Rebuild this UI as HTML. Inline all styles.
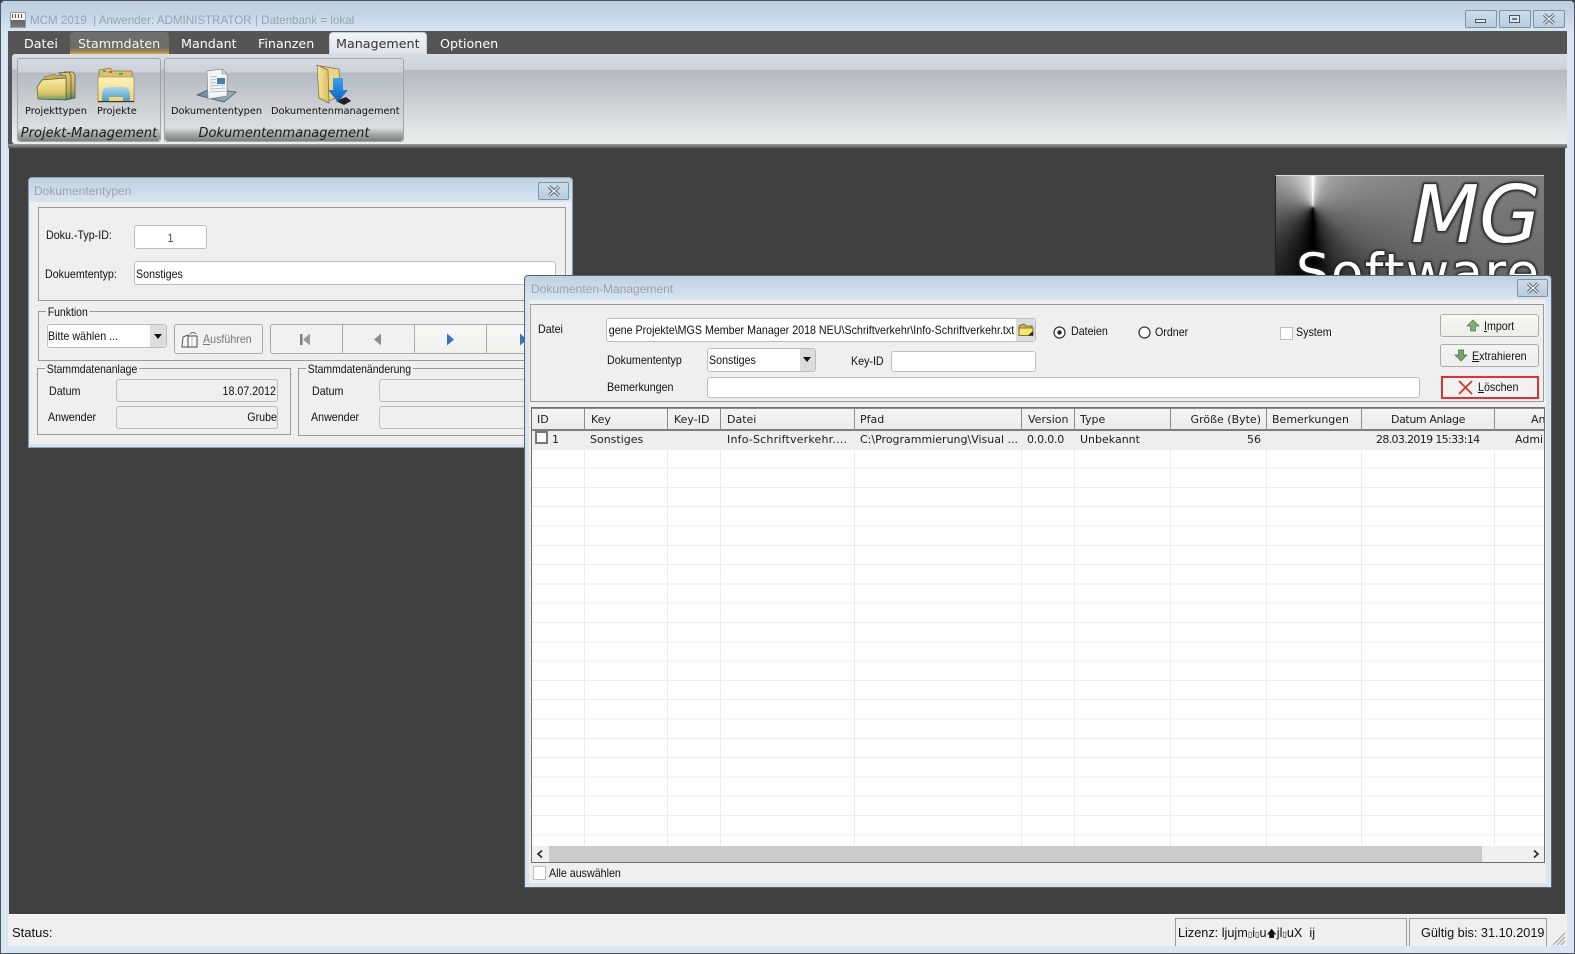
<!DOCTYPE html>
<html lang="de">
<head>
<meta charset="utf-8">
<title>MCM 2019</title>
<style>
html,body{margin:0;padding:0;width:1575px;height:954px;overflow:hidden;background:#404040}
*{box-sizing:border-box}
div,span,svg{position:absolute}
.t{white-space:nowrap;height:16px;font:12px/16px "Liberation Sans",sans-serif;color:#111;transform:scaleX(.89);transform-origin:0 50%}
.tr{transform-origin:100% 50%;text-align:right}
.n{transform:none}
.m{font:12.7px/16px "DejaVu Sans",sans-serif;color:#fff;white-space:nowrap}
.rl{font:9.8px/14px "DejaVu Sans",sans-serif;color:#111;white-space:nowrap}
.gl{font:italic 13px/16px "DejaVu Sans",sans-serif;color:#1a1a1a;white-space:nowrap;text-align:center}
.g{font:11px/16px "DejaVu Sans",sans-serif;color:#1c1c1c;white-space:nowrap}
.gb{border:1px solid #9a9a9a;background:#efefef}
.lg{background:#efefef;padding:0 2px;font:12px/14px "Liberation Sans",sans-serif;color:#111;white-space:nowrap;transform:scaleX(.87);transform-origin:0 50%}
.inp{background:#fff;border:1px solid #bdbdbd;border-radius:3px}
.ro{background:#efefef;border:1px solid #bdbdbd;border-radius:3px}
.btn{background:#f1f1f1;border:1px solid #ababab;border-radius:2px}
.wb{border:1px solid #7f93a8;border-radius:2px;background:linear-gradient(#cddbe8,#b9ccdd)}
.hc{top:0;height:23px;background:linear-gradient(#f4f4f4,#ebebeb);border-left:1px solid #8c8c8c;border-right:1px solid #8c8c8c;border-bottom:2px solid #7d7d7d;border-top:1px solid #8c8c8c;font:11px/21px "DejaVu Sans",sans-serif;color:#1c1c1c;white-space:nowrap;padding-left:6px;overflow:hidden}
.vl{top:0;width:1px;background:#ececec;height:416px}
u{text-decoration:underline}
</style>
</head>
<body>
<!-- main window frame -->
<div style="left:0;top:0;width:1575px;height:954px;background:#d8e5f2;border:1px solid #4c5560;border-radius:5px 5px 0 0"></div>
<div style="left:1px;top:1px;width:1573px;height:30px;background:linear-gradient(#bccfdf,#c5d7e7 50%,#d7e5f2);border-radius:4px 4px 0 0"></div>

<!-- app icon -->
<div style="left:10px;top:12px;width:16px;height:16px;background:linear-gradient(#f6f6f6 0,#f6f6f6 50%,#666 50%,#777);border:1px solid #999"></div>
<div style="left:12px;top:14px;width:12px;height:4px;background:repeating-linear-gradient(90deg,#555 0,#555 1px,#eee 1px,#eee 3px)"></div>
<div class="t n" style="left:30px;top:13px;color:#9aa3ac;font-size:11.6px">MCM 2019&nbsp; | Anwender: ADMINISTRATOR | Datenbank = lokal</div>

<!-- window buttons -->
<div class="wb" style="left:1465px;top:10px;width:32px;height:18px"></div>
<div style="left:1475px;top:19px;width:11px;height:4px;border:1px solid #4d5a66;background:#e8eef4"></div>
<div class="wb" style="left:1499px;top:10px;width:32px;height:18px"></div>
<div style="left:1509px;top:15px;width:11px;height:8px;border:1px solid #4d5a66;background:#dbe5ee"></div>
<div style="left:1512px;top:18px;width:5px;height:2px;background:#6b7885"></div>
<div class="wb" style="left:1533px;top:10px;width:32px;height:18px"></div>
<svg style="left:1542px;top:13px" width="14" height="12" viewBox="0 0 14 12"><path d="M2 1.5L12 10.5M12 1.5L2 10.5" stroke="#55626e" stroke-width="3.2"/><path d="M2 1.5L12 10.5M12 1.5L2 10.5" stroke="#eef3f7" stroke-width="1.3"/></svg>

<!-- menu bar -->
<div style="left:8px;top:31px;width:1559px;height:23px;background:#555"></div>
<div style="left:70px;top:32px;width:99px;height:22px;border-radius:4px 4px 0 0;background:linear-gradient(#6e6e6e 0,#6c6c6a 70%,#a08a54 90%,#d8ae4c 100%)"></div>
<div style="left:329px;top:32px;width:98px;height:23px;border-radius:4px 4px 0 0;background:linear-gradient(#f2f5f8,#dde2e8);border:1px solid #c8ced6;border-bottom:none"></div>
<div class="m" style="left:24px;top:36px">Datei</div>
<div class="m" style="left:78px;top:36px;color:#f6f6ee">Stammdaten</div>
<div class="m" style="left:181px;top:36px">Mandant</div>
<div class="m" style="left:258px;top:36px">Finanzen</div>
<div class="m" style="left:336px;top:36px;color:#333">Management</div>
<div class="m" style="left:440px;top:36px">Optionen</div>

<!-- ribbon -->
<div style="left:8px;top:54px;width:1559px;height:91px;background:#555"></div>
<div style="left:12px;top:54px;width:1555px;height:90px;border-radius:3px 0 0 3px;background:linear-gradient(#d8dde4 0,#cdd2da 17%,#b3b8c3 18%,#c6cacd 45%,#e2e8e8 85%,#e8eeee 100%)"></div>
<div style="left:8px;top:144px;width:1559px;height:4px;background:linear-gradient(#9a9a9a,#7c7c7c 50%,#595959)"></div>

<!-- ribbon group 1 -->
<div style="left:17px;top:58px;width:144px;height:84px;border:1px solid #a0a5aa;border-radius:3px;background:linear-gradient(#d6dbe2 0,#ccd1d9 16%,#b5bac4 17%,#c8ccd0 50%,#e2e7e7 100%)"></div>
<div style="left:18px;top:127px;width:142px;height:14px;background:linear-gradient(#dfe4e4,#a4a6a6 55%,#7f7f7f);border-radius:0 0 3px 3px"></div>
<div class="gl" style="left:18px;top:126px;width:142px;letter-spacing:.05px">Projekt-Management</div>
<!-- ribbon group 2 -->
<div style="left:164px;top:58px;width:240px;height:84px;border:1px solid #a0a5aa;border-radius:3px;background:linear-gradient(#d6dbe2 0,#ccd1d9 16%,#b5bac4 17%,#c8ccd0 50%,#e2e7e7 100%)"></div>
<div style="left:165px;top:127px;width:238px;height:14px;background:linear-gradient(#dfe4e4,#a4a6a6 55%,#7f7f7f);border-radius:0 0 3px 3px"></div>
<div class="gl" style="left:165px;top:126px;width:238px">Dokumentenmanagement</div>

<!-- Projekttypen icon -->
<svg style="left:36px;top:69px" width="40" height="33" viewBox="0 0 40 33">
<defs>
<linearGradient id="fa" x1="0" y1="0" x2="0" y2="1"><stop offset="0" stop-color="#f9ecac"/><stop offset=".65" stop-color="#e2c868"/><stop offset=".8" stop-color="#b4b668"/><stop offset="1" stop-color="#4f9a78"/></linearGradient>
<linearGradient id="fb" x1="0" y1="0" x2="0" y2="1"><stop offset="0" stop-color="#e4cc78"/><stop offset=".7" stop-color="#b8a858"/><stop offset="1" stop-color="#3f8a68"/></linearGradient>
</defs>
<path d="M28 3L37 3L39 6L39 29L34 30L34 6Z" fill="url(#fb)" stroke="#4c4c30" stroke-width=".7"/>
<path d="M23 4L33 3L35 7L35 30L29 31L29 8Z" fill="url(#fb)" stroke="#4c4c30" stroke-width=".7"/>
<path d="M8 8L18 5L21 7L30 6L30 29L5 29Z" fill="#c9ad57" stroke="#6b6236" stroke-width=".5"/>
<path d="M6 11L30 9L30 31L2 30L1 18Z" fill="url(#fa)" stroke="#5b5a30" stroke-width=".7"/>
</svg>
<!-- Projekte icon -->
<svg style="left:97px;top:66px" width="38" height="38" viewBox="0 0 38 38">
<defs>
<linearGradient id="fc" x1="0" y1="0" x2="0" y2="1"><stop offset="0" stop-color="#fdf2bc"/><stop offset="1" stop-color="#ecd076"/></linearGradient>
<linearGradient id="fd" x1="0" y1="0" x2="0" y2="1"><stop offset="0" stop-color="#a8d8ec"/><stop offset="1" stop-color="#4e96c4"/></linearGradient>
</defs>
<path d="M2 4L13 2L16 5L35 5L36 34L2 36Z" fill="#dcc06c" stroke="#8a7840" stroke-width=".7"/>
<rect x="6" y="4" width="3" height="2" fill="#5aa65a"/><rect x="12" y="5" width="3" height="2" fill="#c45a4a"/><rect x="22" y="7" width="4" height="2" fill="#5aa65a"/>
<path d="M1 11L37 11L37 36L1 36Z" fill="url(#fc)" stroke="#8a7840" stroke-width=".6"/>
<path d="M5 36L5 28Q5 21 12 21L26 21Q33 21 33 28L33 36L26 36L26 31L12 31L12 36Z" fill="url(#fd)"/>
<path d="M1 35.5L37 35.5" stroke="#3a3620" stroke-width="1"/>
</svg>
<!-- Dokumententypen icon -->
<svg style="left:196px;top:68px" width="42" height="36" viewBox="0 0 42 36">
<defs><linearGradient id="pl" x1="0" y1="0" x2="1" y2="0"><stop offset="0" stop-color="#6d8aa0"/><stop offset="1" stop-color="#9fb2c0"/></linearGradient></defs>
<path d="M1 27L14 21L40 24L28 34Z" fill="url(#pl)" stroke="#4c5a66" stroke-width=".8"/>
<path d="M11 3L26 1L31 6L31 28L12 31Z" fill="#f3f5f8" stroke="#7d8a94" stroke-width=".7"/>
<path d="M26 1L26 6L31 6Z" fill="#c9d2da" stroke="#7d8a94" stroke-width=".5"/>
<rect x="21" y="10" width="8" height="6" fill="#4b7ea4"/>
<path d="M14 9L20 8.5M14 12L20 11.5M14 15L20 14.5M14 18L29 17M14 21L29 20M14 24L29 23" stroke="#b4bec6" stroke-width="1"/>
</svg>
<!-- Dokumentenmanagement icon -->
<svg style="left:316px;top:64px" width="36" height="41" viewBox="0 0 36 41">
<defs>
<linearGradient id="ye" x1="0" y1="0" x2="1" y2="0"><stop offset="0" stop-color="#f8e8a2"/><stop offset="1" stop-color="#dcbc62"/></linearGradient>
<linearGradient id="bl" x1="0" y1="0" x2="0" y2="1"><stop offset="0" stop-color="#3aa2ee"/><stop offset="1" stop-color="#0f5fb8"/></linearGradient>
</defs>
<path d="M4 2L23 5L24 32L10 38Z" fill="#ecd488" stroke="#7c6c38" stroke-width=".7"/>
<path d="M1 1L12 6L13 39L3 34Z" fill="url(#ye)" stroke="#7c6c38" stroke-width=".7"/>
<path d="M20 37L28 41L35 37L30 33Z" fill="#222"/>
<path d="M17 14L27 14L27 26L32 26L22 38L12 26L17 26Z" fill="url(#bl)"/>
</svg>

<div class="rl" style="left:25px;top:105px">Projekttypen</div>
<div class="rl" style="left:97px;top:105px">Projekte</div>
<div class="rl" style="left:171px;top:105px">Dokumententypen</div>
<div class="rl" style="left:271px;top:105px">Dokumentenmanagement</div>

<!-- MDI background -->
<div style="left:9px;top:148px;width:1556px;height:766px;background:#404040"></div>

<!-- Logo -->
<div style="left:1275px;top:175px;width:269px;height:105px;overflow:hidden;border-top:1px solid #d8d8d8;border-left:1px solid #222;background:conic-gradient(from 0deg at 37px 31px,#fff 0deg,#c8c8c8 8deg,#a2a2a2 30deg,#808080 80deg,#5c5c5c 125deg,#2c2c2c 160deg,#000 178deg,#000 182deg,#2a2a2a 215deg,#6a6a6a 270deg,#a8a8a8 320deg,#d8d8d8 352deg,#fff 360deg)">
<svg style="left:0;top:0" width="270" height="105" viewBox="0 0 270 105">
<defs><filter id="gw" x="-10%" y="-10%" width="120%" height="120%"><feGaussianBlur stdDeviation="1"/></filter></defs>
<g font-family="'DejaVu Sans',sans-serif" stroke-linejoin="round">
<text x="135" y="66" font-size="79" font-style="italic" fill="none" stroke="#222" stroke-width="3.5" filter="url(#gw)">MG</text>
<text x="135" y="66" font-size="79" font-style="italic" fill="#fff">MG</text>
<text x="20" y="115" font-size="53" textLength="243" fill="none" stroke="#222" stroke-width="3" filter="url(#gw)">Software</text>
<text x="20" y="115" font-size="53" textLength="243" fill="#fff">Software</text>
</g>
</svg>
</div>

<!-- Dialog 1 -->
<div style="left:28px;top:177px;width:545px;height:271px;background:#efefef;border:1px solid #8fa2b4;border-radius:4px 4px 0 0"></div>
<div style="left:29px;top:178px;width:543px;height:24px;background:linear-gradient(#bfd1e0,#d8e5f1);border-radius:3px 3px 0 0"></div>
<div style="left:29px;top:202px;width:543px;height:245px;background:#efefef;border:solid #d8e5f1;border-width:0 1px 3px"></div>
<div class="t n" style="left:34px;top:183px;color:#9aa3ac">Dokumententypen</div>
<div class="wb" style="left:538px;top:182px;width:31px;height:18px"></div>
<svg style="left:547px;top:185px" width="14" height="12" viewBox="0 0 14 12"><path d="M2 1.5L12 10.5M12 1.5L2 10.5" stroke="#55626e" stroke-width="3.2"/><path d="M2 1.5L12 10.5M12 1.5L2 10.5" stroke="#eef3f7" stroke-width="1.3"/></svg>

<div class="gb" style="left:38px;top:207px;width:528px;height:94px"></div>
<div class="t" style="left:46px;top:227px">Doku.-Typ-ID:</div>
<div class="inp" style="left:134px;top:225px;width:73px;height:24px"></div>
<div class="t" style="left:134px;top:230px;width:73px;text-align:center;transform-origin:50% 50%;color:#444">1</div>
<div class="t" style="left:45px;top:266px">Dokuemtentyp:</div>
<div class="inp" style="left:134px;top:261px;width:422px;height:24px"></div>
<div class="t" style="left:136px;top:266px">Sonstiges</div>

<div class="gb" style="left:38px;top:311px;width:528px;height:50px"></div>
<div class="lg" style="left:46px;top:305px">Funktion</div>
<div class="inp" style="left:47px;top:324px;width:120px;height:24px"></div>
<div class="t" style="left:48px;top:328px">Bitte wählen ...</div>
<div style="left:150px;top:325px;width:16px;height:22px;background:#dcdcdc;border-radius:0 3px 3px 0"></div>
<div style="left:154px;top:334px;width:0;height:0;border:4px solid transparent;border-top:5px solid #111;border-bottom:none"></div>
<div class="btn" style="left:174px;top:324px;width:89px;height:30px;border-radius:3px"></div>
<svg style="left:181px;top:331px" width="18" height="18" viewBox="0 0 18 18"><path d="M1 16L2 6L7 4L7 16Z" fill="#f4f4f4" stroke="#555"/><path d="M7 5L16 5L16 16L7 16Z" fill="#f8f8f8" stroke="#444"/><path d="M9 3Q12 0 15 3" fill="none" stroke="#666"/><path d="M11 6L11 15" stroke="#bbb"/></svg>
<div class="t" style="left:203px;top:331px;color:#777"><u>A</u>usführen</div>
<div class="btn" style="left:270px;top:324px;width:73px;height:30px;border-radius:3px 0 0 3px"></div>
<div class="btn" style="left:342px;top:324px;width:73px;height:30px;border-radius:0"></div>
<div class="btn" style="left:414px;top:324px;width:73px;height:30px;border-radius:0;background:linear-gradient(#f7f7f7,#f0f0ec)"></div>
<div class="btn" style="left:486px;top:324px;width:73px;height:30px;border-radius:0;background:linear-gradient(#f7f7f7,#f0f0ec)"></div>
<svg style="left:298px;top:332px" width="16" height="15" viewBox="0 0 16 15"><rect x="2" y="2" width="2.5" height="11" fill="#7d7d7d"/><path d="M12 1.5L12 13.5L5 7.5Z" fill="#9a9a9a"/></svg>
<svg style="left:372px;top:332px" width="12" height="15" viewBox="0 0 12 15"><path d="M9 1.5L9 13.5L2 7.5Z" fill="#8c8c8c"/></svg>
<svg style="left:444px;top:332px" width="12" height="15" viewBox="0 0 12 15"><path d="M3 1.5L3 13.5L10 7.5Z" fill="#3f6fc0"/></svg>
<svg style="left:517px;top:332px" width="12" height="15" viewBox="0 0 12 15"><path d="M3 1.5L3 13.5L10 7.5Z" fill="#3f6fc0"/></svg>

<div class="gb" style="left:37px;top:368px;width:254px;height:67px"></div>
<div class="lg" style="left:45px;top:362px">Stammdatenanlage</div>
<div class="t" style="left:49px;top:383px">Datum</div>
<div class="ro" style="left:116px;top:379px;width:162px;height:23px"></div>
<div class="t tr" style="left:116px;top:383px;width:160px">18.07.2012</div>
<div class="t" style="left:48px;top:409px">Anwender</div>
<div class="ro" style="left:116px;top:406px;width:162px;height:23px"></div>
<div class="t tr" style="left:116px;top:409px;width:161px">Grube</div>

<div class="gb" style="left:298px;top:368px;width:266px;height:68px"></div>
<div class="lg" style="left:306px;top:362px">Stammdatenänderung</div>
<div class="t" style="left:312px;top:383px">Datum</div>
<div class="ro" style="left:379px;top:379px;width:180px;height:23px"></div>
<div class="t" style="left:311px;top:409px">Anwender</div>
<div class="ro" style="left:379px;top:406px;width:180px;height:23px"></div>

<!-- Dialog 2 -->
<div style="left:524px;top:275px;width:1028px;height:613px;background:#efefef;border:1px solid #59636d;border-radius:4px 4px 0 0"></div>
<div style="left:525px;top:276px;width:1026px;height:24px;background:linear-gradient(#bfd1e0,#d8e5f1);border-radius:3px 3px 0 0"></div>
<div style="left:525px;top:300px;width:1026px;height:587px;background:#efefef;border:solid #d8e5f1;border-width:0 5px 4px 4px"></div>
<div class="t n" style="left:531px;top:281px;color:#9aa3ac">Dokumenten-Management</div>
<div class="wb" style="left:1517px;top:279px;width:31px;height:18px"></div>
<svg style="left:1526px;top:282px" width="14" height="12" viewBox="0 0 14 12"><path d="M2 1.5L12 10.5M12 1.5L2 10.5" stroke="#55626e" stroke-width="3.2"/><path d="M2 1.5L12 10.5M12 1.5L2 10.5" stroke="#eef3f7" stroke-width="1.3"/></svg>

<div class="gb" style="left:530px;top:304px;width:1014px;height:98px"></div>
<div class="t" style="left:538px;top:321px">Datei</div>
<div class="inp" style="left:606px;top:318px;width:430px;height:24px"></div>
<div style="left:609px;top:322px;width:405px;height:16px;overflow:hidden">
  <div class="t tr" style="right:0;top:0">Eigene Projekte\MGS Member Manager 2018 NEU\Schriftverkehr\Info-Schriftverkehr.txt</div>
</div>
<div style="left:1016px;top:319px;width:19px;height:22px;background:#dcdcdc;border-radius:0 3px 3px 0"></div>
<svg style="left:1018px;top:323px" width="16" height="14" viewBox="0 0 16 14"><path d="M1 3L6 1L8 3L14 3L14 12L1 12Z" fill="#d9b850" stroke="#5c5020" stroke-width=".8"/><path d="M1 5L15 5L15 12.5L1 12.5Z" fill="#f7e86a" stroke="#5c5020" stroke-width=".8"/><path d="M10 12.5L15 12.5L15 8Z" fill="#222"/></svg>
<div class="t" style="left:607px;top:352px">Dokumententyp</div>
<div class="inp" style="left:707px;top:348px;width:109px;height:24px"></div>
<div class="t" style="left:709px;top:352px">Sonstiges</div>
<div style="left:800px;top:349px;width:15px;height:22px;background:#dcdcdc;border-radius:0 3px 3px 0"></div>
<div style="left:803px;top:357px;width:0;height:0;border:4px solid transparent;border-top:5px solid #111;border-bottom:none"></div>
<div class="t" style="left:851px;top:353px">Key-ID</div>
<div class="inp" style="left:891px;top:351px;width:145px;height:21px"></div>
<div class="t" style="left:607px;top:379px">Bemerkungen</div>
<div class="inp" style="left:707px;top:377px;width:713px;height:21px"></div>

<svg style="left:1052px;top:325px" width="15" height="15" viewBox="0 0 15 15"><circle cx="7.5" cy="7.5" r="5.5" fill="#fff" stroke="#333" stroke-width="1.2"/><circle cx="7.5" cy="7.5" r="2.2" fill="#222"/></svg>
<div class="t" style="left:1071px;top:323px">Dateien</div>
<svg style="left:1137px;top:325px" width="15" height="15" viewBox="0 0 15 15"><circle cx="7.5" cy="7.5" r="5.5" fill="#fff" stroke="#333" stroke-width="1.2"/></svg>
<div class="t" style="left:1155px;top:324px">Ordner</div>
<div style="left:1280px;top:327px;width:13px;height:13px;background:#fff;border:1px solid #bdbdbd"></div>
<div class="t" style="left:1296px;top:324px">System</div>

<div class="btn" style="left:1440px;top:314px;width:99px;height:23px;border-radius:3px;background:linear-gradient(#f8f8f4,#eeeee8)"></div>
<svg style="left:1466px;top:319px" width="14" height="13" viewBox="0 0 14 13"><path d="M7 1L13 7L9.5 7L9.5 12L4.5 12L4.5 7L1 7Z" fill="#7fb07a" stroke="#4b7a48" stroke-width=".7"/></svg>
<div class="t" style="left:1484px;top:318px"><u>I</u>mport</div>
<div class="btn" style="left:1440px;top:344px;width:99px;height:23px;border-radius:3px;background:linear-gradient(#f4f4f4,#eeeeee)"></div>
<svg style="left:1454px;top:349px" width="14" height="13" viewBox="0 0 14 13"><path d="M7 12L13 6L9.5 6L9.5 1L4.5 1L4.5 6L1 6Z" fill="#7fa070" stroke="#4b6a44" stroke-width=".7"/></svg>
<div class="t" style="left:1472px;top:348px"><u>E</u>xtrahieren</div>
<div class="btn" style="left:1441px;top:376px;width:98px;height:23px;border:2px solid #c83c3c;border-radius:0;background:#f2f0f0;box-shadow:0 0 1px #e8a0a0"></div>
<svg style="left:1457px;top:380px" width="17" height="15" viewBox="0 0 17 15"><path d="M2 1L15 14M15 1L2 14" stroke="#cf3a28" stroke-width="1.8"/></svg>
<div class="t" style="left:1478px;top:379px"><u>L</u>öschen</div>

<!-- table -->
<div style="left:531px;top:407px;width:1014px;height:456px;background:#fff;border:1px solid #6f6f6f;overflow:hidden">
  <div style="left:0;top:22px;width:1012px;height:416px;background:repeating-linear-gradient(#fff 0,#fff 18.3px,#ececec 18.3px,#ececec 19.3px)">
    <div class="vl" style="left:52px"></div><div class="vl" style="left:135px"></div><div class="vl" style="left:188px"></div><div class="vl" style="left:322px"></div><div class="vl" style="left:489px"></div><div class="vl" style="left:542px"></div><div class="vl" style="left:638px"></div><div class="vl" style="left:734px"></div><div class="vl" style="left:829px"></div><div class="vl" style="left:962px"></div>
  </div>
  <div style="left:0;top:22px;width:1012px;height:20px;background:#eeeeee"></div>
  <div class="hc" style="left:-1px;width:54px;padding-left:5px">ID</div>
  <div class="hc" style="left:52px;width:84px">Key</div>
  <div class="hc" style="left:135px;width:54px">Key-ID</div>
  <div class="hc" style="left:188px;width:135px">Datei</div>
  <div class="hc" style="left:322px;width:168px;padding-left:5px">Pfad</div>
  <div class="hc" style="left:489px;width:54px">Version</div>
  <div class="hc" style="left:542px;width:97px;padding-left:5px">Type</div>
  <div class="hc" style="left:638px;width:97px;text-align:right;padding:0 5px 0 0">Größe (Byte)</div>
  <div class="hc" style="left:734px;width:96px;padding-left:5px">Bemerkungen</div>
  <div class="hc" style="left:829px;width:134px;text-align:center;padding:0;letter-spacing:-.4px">Datum Anlage</div>
  <div class="hc" style="left:962px;width:60px;padding:0 0 0 36px">Anwender</div>

  <div style="left:3px;top:23px;width:13px;height:13px;background:#fff;border:2px solid #777"></div>
  <div class="g" style="left:20px;top:24px">1</div>
  <div class="g" style="left:58px;top:24px">Sonstiges</div>
  <div class="g" style="left:195px;top:24px;letter-spacing:.2px">Info-Schriftverkehr....</div>
  <div class="g" style="left:328px;top:24px">C:\Programmierung\Visual ...</div>
  <div class="g" style="left:495px;top:24px;letter-spacing:-.2px">0.0.0.0</div>
  <div class="g" style="left:548px;top:24px">Unbekannt</div>
  <div class="g" style="left:638px;top:24px;width:91px;text-align:right">56</div>
  <div class="g" style="left:844px;top:24px;letter-spacing:-.65px">28.03.2019 15:33:14</div>
  <div class="g" style="left:983px;top:24px;width:29px;overflow:hidden">Admin</div>

  <!-- scrollbar -->
  <div style="left:0;top:438px;width:1012px;height:16px;background:#f0f0f0"></div>
  <div style="left:17px;top:438px;width:933px;height:16px;background:#cbcbcb"></div>
  <svg style="left:3px;top:441px" width="10" height="10" viewBox="0 0 10 10"><path d="M7 1.5L3 5L7 8.5" fill="none" stroke="#222" stroke-width="1.6"/></svg>
  <svg style="left:999px;top:441px" width="10" height="10" viewBox="0 0 10 10"><path d="M3 1.5L7 5L3 8.5" fill="none" stroke="#222" stroke-width="1.6"/></svg>
</div>
<div style="left:533px;top:866px;width:13px;height:14px;background:#fff;border:1px solid #bdbdbd"></div>
<div class="t" style="left:549px;top:865px">Alle auswählen</div>

<!-- status bar -->
<div style="left:8px;top:914px;width:1559px;height:1px;background:#f8f8f8"></div>
<div style="left:8px;top:915px;width:1559px;height:31px;background:#efefef"></div>
<div class="t n" style="left:12px;top:925px;font-size:13px">Status:</div>
<div style="left:1175px;top:918px;width:232px;height:28px;border:1px solid #9a9a9a;border-bottom:none"></div>
<div class="t n" style="left:1178px;top:925px;font-size:12.7px">Lizenz: ljujm<span style="position:static;font-size:8px">▯</span>i<span style="position:static;font-size:8px">▯</span>u<span style="position:static;font-size:10px">🡅</span>jl<span style="position:static;font-size:8px">▯</span>uX&nbsp; ij</div>
<div style="left:1409px;top:918px;width:138px;height:28px;border:1px solid #9a9a9a;border-bottom:none"></div>
<div class="t n" style="left:1421px;top:925px;font-size:12.7px">Gültig bis: 31.10.2019</div>
<svg style="left:1552px;top:930px" width="14" height="16" viewBox="0 0 14 16"><path d="M1 15L13 3M5 15L13 7M9 15L13 11" stroke="#9a9a9a" stroke-width="1"/></svg>
</body>
</html>
